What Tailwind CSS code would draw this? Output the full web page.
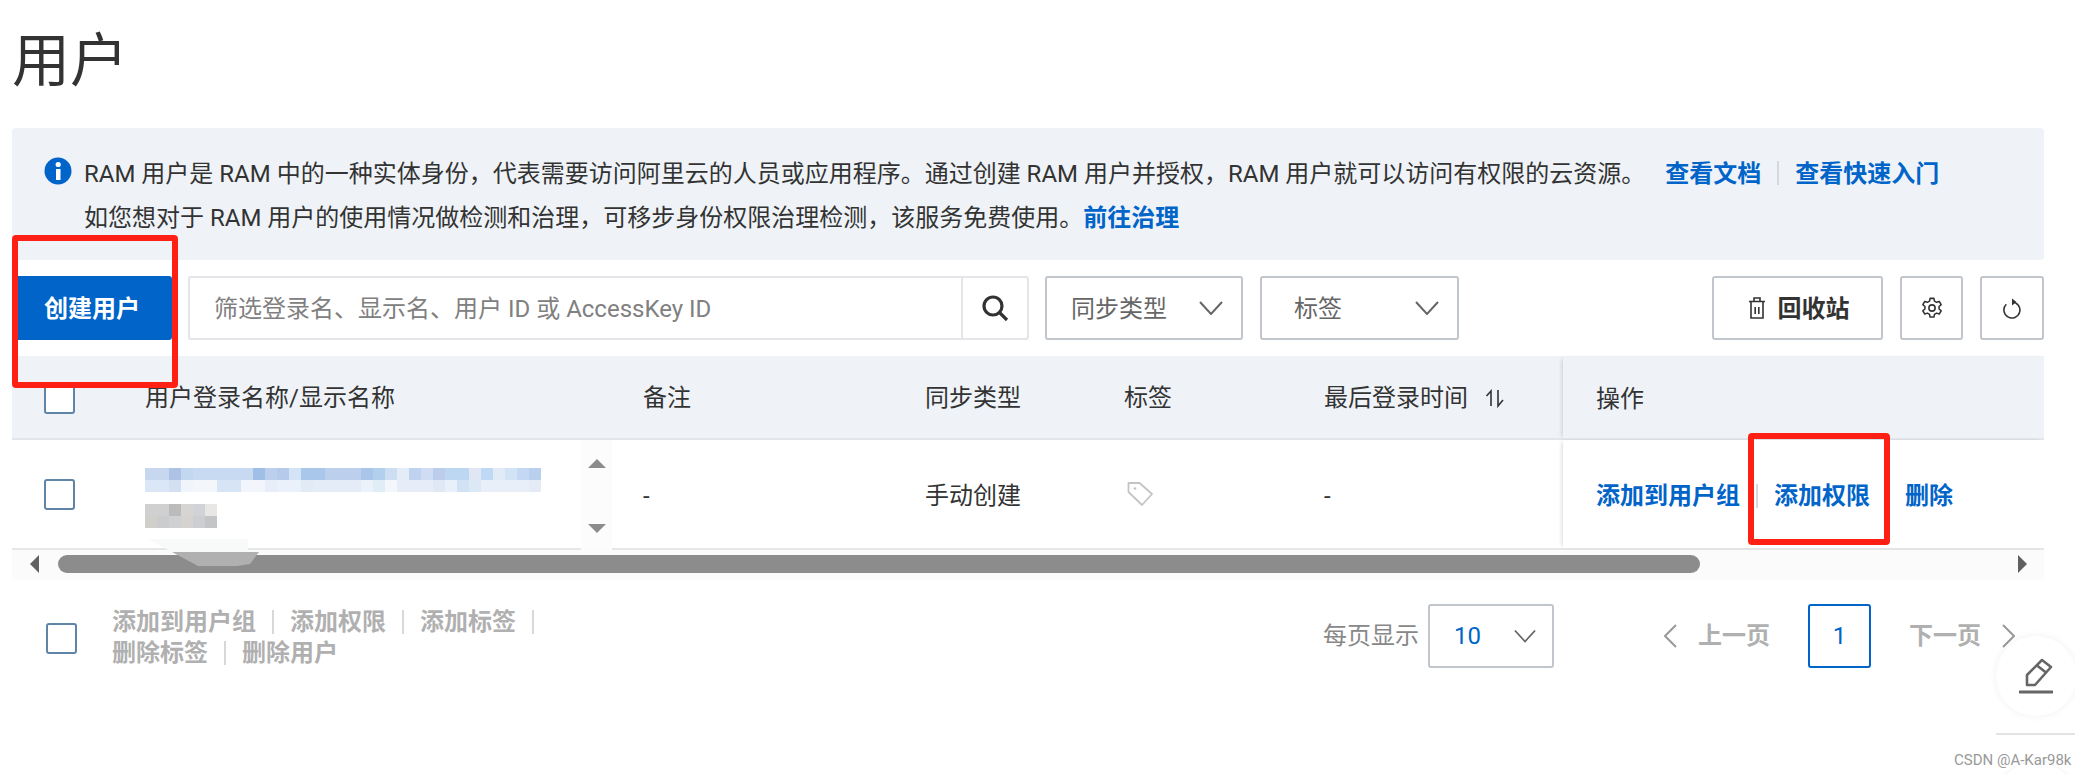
<!DOCTYPE html>
<html lang="zh">
<head>
    <meta charset="UTF-8">
    <title>用户</title>
    <script src="https://cdn.jsdelivr.net/npm/@tailwindcss/browser@4"></script>
</head>
<body class="bg-white text-[#333] text-[24px] [font-family:'Roboto','Noto_Sans_CJK_SC',sans-serif]">
<div class="relative w-[2075px] h-[775px] overflow-hidden pl-[12px] pr-[31px]">

    <!-- Title -->
    <div class="h-[128px] pt-[23px]">
        <h1 class="text-[58px] leading-[76px] font-normal">用户</h1>
    </div>

    <!-- Info banner -->
    <div class="h-[132px] bg-[#eff3f8] rounded-[4px] pt-[24px] flex">
        <svg class="ml-[32px] mt-[5px] mr-[12px] shrink-0" width="28" height="28" viewBox="0 0 28 28">
            <circle cx="14" cy="14" r="13.5" fill="#0064c8"/>
            <rect x="12" y="12" width="4.5" height="11" fill="#fff"/>
            <circle cx="14.2" cy="7.5" r="2.6" fill="#fff"/>
        </svg>
        <div class="leading-[44px] whitespace-nowrap">
            <p>RAM 用户是 RAM 中的一种实体身份，代表需要访问阿里云的人员或应用程序。通过创建 RAM 用户并授权，RAM 用户就可以访问有权限的云资源。<a class="ml-[20px] font-bold text-[#0064c8]">查看文档</a><span class="inline-block w-[2px] h-[24px] bg-[#d5d9de] mx-[16px] align-[-3px]"></span><a class="font-bold text-[#0064c8]">查看快速入门</a></p>
            <p>如您想对于 RAM 用户的使用情况做检测和治理，可移步身份权限治理检测，该服务免费使用。<a class="font-bold text-[#0064c8]">前往治理</a></p>
        </div>
    </div>

    <!-- Toolbar -->
    <div class="h-[96px] flex items-center">
        <button class="w-[160px] h-[64px] pt-[2px] bg-[#0064c8] text-white font-bold rounded-[3px]">创建用户</button>
        <div class="ml-[16px] w-[841px] h-[64px] border-2 border-[#e3e5e8] rounded-[3px] flex">
            <div class="flex-1 pl-[24px] leading-[62px] text-[#808080]">筛选登录名、显示名、用户 ID 或 AccessKey ID</div>
            <div class="w-[66px] border-l-2 border-[#e3e5e8] flex items-center justify-center">
                <svg width="28" height="28" viewBox="0 0 28 28" fill="none" stroke="#333" stroke-width="3.2"><circle cx="12" cy="12" r="9"/><path d="M18.5 18.5 26 26"/></svg>
            </div>
        </div>
        <div class="ml-[16px] w-[198px] h-[64px] pt-[2px] border-2 border-[#c1c6cc] rounded-[3px] flex items-center justify-between pl-[24px] pr-[18px] text-[#666]">
            <span>同步类型</span>
            <svg class="-mt-[2px]" width="24" height="14" viewBox="0 0 24 14" fill="none" stroke="#666" stroke-width="2"><path d="M1 1l11 12L23 1"/></svg>
        </div>
        <div class="ml-[17px] w-[199px] h-[64px] pt-[2px] border-2 border-[#c1c6cc] rounded-[3px] flex items-center justify-between pl-[32px] pr-[18px] text-[#666]">
            <span>标签</span>
            <svg class="-mt-[2px]" width="24" height="14" viewBox="0 0 24 14" fill="none" stroke="#666" stroke-width="2"><path d="M1 1l11 12L23 1"/></svg>
        </div>
        <button class="ml-auto w-[171px] h-[64px] pl-[3px] border-2 border-[#c1c6cc] rounded-[3px] flex items-center justify-center gap-[13px] font-bold">
            <svg width="16" height="22" viewBox="0 0 16 22" fill="none" stroke="#333" stroke-width="1.6"><path d="M0 4.5h16M5 4V1h6v3M2 5v16h12V5M6.2 10v7M9.8 10v7"/></svg>
            <span class="pt-[2px]">回收站</span>
        </button>
        <button class="ml-[17px] w-[63px] h-[64px] border-2 border-[#c1c6cc] rounded-[3px] flex items-center justify-center">
            <svg width="22" height="22" viewBox="0 0 24 24" fill="none" stroke="#333" stroke-width="1.7"><circle cx="12" cy="12" r="3.4"/><path d="M9.9 1.5h4.2l.6 3 2.3 1.3 2.9-1 2.1 3.6-2.3 2 0 2.6 2.3 2-2.1 3.6-2.9-1-2.3 1.3-.6 3H9.900l-.6-3-2.300-1.300-2.900 1-2.100-3.600 2.300-2V10.400l-2.300-2 2.100-3.600 2.900 1 2.300-1.300z" stroke-linejoin="round"/></svg>
        </button>
        <button class="ml-[17px] w-[64px] h-[64px] border-2 border-[#c1c6cc] rounded-[3px] flex items-center justify-center">
            <svg width="20" height="22" viewBox="0 0 20 22" fill="none" stroke="#333" stroke-width="1.6"><path d="M10 5A8 8 0 1 1 4.300 7.300"/><path d="M10 1.500l4.500 3.500-4.500 3.500z" fill="#333" stroke="none"/></svg>
        </button>
    </div>

    <!-- Table -->
    <div class="grid grid-cols-[133px_498px_282px_199px_200px_239px_1fr] h-[84px] bg-[#eff3f8] border-b-2 border-[#e3e5e8] items-center leading-[84px]">
        <div class="pl-[32px]"><div class="w-[31px] h-[31px] bg-white border-2 border-[#5f84a8] rounded-[3px]"></div></div>
        <div>用户登录名称/显示名称</div>
        <div>备注</div>
        <div>同步类型</div>
        <div>标签</div>
        <div class="flex items-center gap-[17px]">
            <span>最后登录时间</span>
            <svg width="20" height="20" viewBox="0 0 20 20" fill="none" stroke="#333" stroke-width="1.6"><path d="M6 18V3L1.500 8M13 2v16l5-6"/></svg>
        </div>
        <div class="pl-[33px] h-[82px] shadow-[-3px_0_4px_-2px_rgba(0,0,0,0.15)]">操作</div>
    </div>
    <div class="grid grid-cols-[133px_498px_282px_199px_200px_239px_1fr] h-[110px] border-b-2 border-[#e6e6e6] items-center">
        <div class="pl-[32px]"><div class="w-[31px] h-[31px] border-2 border-[#5f84a8] rounded-[3px]"></div></div>
        <div class="relative h-[108px] pt-[28px]">
            <!-- mosaic over the user name -->
            <div class="flex h-[12px]">
                <div class="w-[24px] bg-[#c6d7ef]"></div><div class="w-[12px] bg-[#aec2e5]"></div><div class="w-[12px] bg-[#c2d8f0]"></div><div class="w-[60px] bg-[#c8daf1]"></div><div class="w-[12px] bg-[#9fbfe6]"></div><div class="w-[12px] bg-[#bcd0ee]"></div><div class="w-[12px] bg-[#b6cbeb]"></div><div class="w-[12px] bg-[#d2e4f6]"></div><div class="w-[24px] bg-[#a9c7ea]"></div><div class="w-[36px] bg-[#bcd0ed]"></div><div class="w-[12px] bg-[#a9c5ea]"></div><div class="w-[12px] bg-[#b0d0ee]"></div><div class="w-[12px] bg-[#cddef3]"></div><div class="w-[12px] bg-[#e4ecf8]"></div><div class="w-[12px] bg-[#bfd3f0]"></div><div class="w-[12px] bg-[#cfdcf4]"></div><div class="w-[12px] bg-[#bccdec]"></div><div class="w-[24px] bg-[#bdd7f2]"></div><div class="w-[12px] bg-[#e1e6f5]"></div><div class="w-[12px] bg-[#bed8f5]"></div><div class="w-[12px] bg-[#e1ebf7]"></div><div class="w-[12px] bg-[#d2e3f6]"></div><div class="w-[12px] bg-[#c4d8f3]"></div><div class="w-[12px] bg-[#b9cfee]"></div>
            </div>
            <div class="flex h-[12px]">
                <div class="w-[24px] bg-[#dbe7f7]"></div><div class="w-[12px] bg-[#d2e0f2]"></div><div class="w-[12px] bg-[#eff5fb]"></div><div class="w-[24px] bg-[#f3f6fb]"></div><div class="w-[24px] bg-[#d6e4f6]"></div><div class="w-[24px] bg-[#f2f6fc]"></div><div class="w-[12px] bg-[#e8eef9]"></div><div class="w-[24px] bg-[#eaf1fa]"></div><div class="w-[12px] bg-[#e1ebf6]"></div><div class="w-[36px] bg-[#e4ecf8]"></div><div class="w-[12px] bg-[#e4edf7]"></div><div class="w-[12px] bg-[#ecf2fa]"></div><div class="w-[12px] bg-[#e0ecf6]"></div><div class="w-[12px] bg-[#f3f7fc]"></div><div class="w-[36px] bg-[#e6edf8]"></div><div class="w-[12px] bg-[#e0e8f6]"></div><div class="w-[12px] bg-[#e8f0f9]"></div><div class="w-[12px] bg-[#d2e2f5]"></div><div class="w-[12px] bg-[#dde8f6]"></div><div class="w-[48px] bg-[#e9eff9]"></div><div class="w-[12px] bg-[#e4ebf7]"></div>
            </div>
            <div class="flex h-[12px] mt-[12px]">
                <div class="w-[24px] bg-[#d0d0d0]"></div><div class="w-[12px] bg-[#bbbbbb]"></div><div class="w-[12px] bg-[#d6d5d3]"></div><div class="w-[12px] bg-[#d2d3d8]"></div><div class="w-[12px] bg-[#e8e7e5]"></div>
            </div>
            <div class="flex h-[12px]">
                <div class="w-[12px] bg-[#d0cfcc]"></div><div class="w-[12px] bg-[#cbccce]"></div><div class="w-[12px] bg-[#cfd0d1]"></div><div class="w-[12px] bg-[#d5d2cf]"></div><div class="w-[12px] bg-[#cdced2]"></div><div class="w-[12px] bg-[#c4c5c6]"></div>
            </div>
            <!-- little scroll bar of the cell -->
            <div class="absolute left-[436px] top-0 w-[31px] h-[110px] bg-[#fcfcfc] flex flex-col items-center justify-between pt-[19px] pb-[17px]">
                <div class="w-0 h-0 border-x-[9px] border-x-transparent border-b-[9px] border-b-[#8c8c8c]"></div>
                <div class="w-0 h-0 border-x-[9px] border-x-transparent border-t-[9px] border-t-[#8c8c8c]"></div>
            </div>
        </div>
        <div class="pt-[4px]">-</div>
        <div class="pt-[4px]">手动创建</div>
        <div class="pl-[3px]">
            <svg width="26" height="26" viewBox="0 0 26 26" fill="none" stroke="#c4c4c4" stroke-width="1.8" stroke-linejoin="round"><path d="M1.500 2h11L25 13 15 24 1.500 11z"/><circle cx="8" cy="7.500" r="1.300" fill="#c4c4c4" stroke="none"/></svg>
        </div>
        <div class="pt-[4px]">-</div>
        <div class="pl-[33px] h-[108px] pt-[4px] flex items-center font-bold text-[#0064c8] shadow-[-3px_0_4px_-2px_rgba(0,0,0,0.15)]">
            <a>添加到用户组</a><span class="w-[2px] h-[24px] bg-[#d5d9de] ml-[16px] mr-[16px]"></span><a>添加权限</a><a class="ml-[35px]">删除</a>
        </div>
    </div>

    <!-- Horizontal scroll bar -->
    <div class="h-[30px] bg-[#fbfbfb] flex items-center pl-[18px] pr-[17px] pb-[2px]">
        <div class="w-0 h-0 border-y-[9px] border-y-transparent border-r-[9px] border-r-[#606060]"></div>
        <div class="ml-[19px] w-[1642px] h-[18px] bg-[#8c8c8c] rounded-full"></div>
        <div class="ml-auto w-0 h-0 border-y-[9px] border-y-transparent border-l-[9px] border-l-[#606060]"></div>
    </div>

    <!-- Footer -->
    <div class="flex pt-[24px] h-[88px]">
        <div class="ml-[34px] mt-[19px] w-[31px] h-[31px] border-2 border-[#5f84a8] rounded-[3px]"></div>
        <div class="ml-[35px] w-[460px] text-[#b0b0b0] font-bold leading-[30px] pt-[3px]">
            <div class="flex items-center h-[30px]"><span>添加到用户组</span><i class="w-[2px] h-[24px] bg-[#d8d8d8] mx-[16px]"></i><span>添加权限</span><i class="w-[2px] h-[24px] bg-[#d8d8d8] mx-[16px]"></i><span>添加标签</span><i class="w-[2px] h-[24px] bg-[#d8d8d8] mx-[16px]"></i></div>
            <div class="flex items-center h-[30px] mt-[1px]"><span>删除标签</span><i class="w-[2px] h-[24px] bg-[#d8d8d8] mx-[16px]"></i><span>删除用户</span></div>
        </div>
        <div class="ml-[751px] flex items-center h-[64px] text-[#888]">
            <span>每页显示</span>
            <div class="ml-[9px] w-[126px] h-[64px] border-2 border-[#c1c6cc] rounded-[3px] flex items-center justify-between pl-[24px] pr-[16px] text-[#0064c8]">
                <span>10</span>
                <svg width="22" height="14" viewBox="0 0 24 14" fill="none" stroke="#666" stroke-width="2"><path d="M1 1l11 12L23 1"/></svg>
            </div>
            <svg class="ml-[110px]" width="13" height="24" viewBox="0 0 13 24" fill="none" stroke="#999" stroke-width="2"><path d="M12 1 1 12l11 11"/></svg>
            <span class="ml-[21px] font-bold text-[#b0b0b0]">上一页</span>
            <div class="ml-[38px] w-[63px] h-[64px] border-2 border-[#0064c8] rounded-[3px] flex items-center justify-center text-[#0064c8]">1</div>
            <span class="ml-[38px] font-bold text-[#b0b0b0]">下一页</span>
            <svg class="ml-[21px]" width="13" height="24" viewBox="0 0 13 24" fill="none" stroke="#999" stroke-width="2"><path d="M1 1l11 11L1 23"/></svg>
        </div>
    </div>

    <!-- Red annotation boxes -->
    <div class="absolute left-[12px] top-[235px] w-[166px] h-[153px] border-[6px] border-[#ff2015] rounded-[4px]"></div>
    <div class="absolute left-[1748px] top-[433px] w-[142px] h-[112px] border-[6px] border-[#ff2015] rounded-[4px]"></div>

    <!-- Smear left by the mosaic -->
    <svg class="absolute left-[148px] top-[538px]" width="115" height="30" viewBox="0 0 115 30">
        <path d="M0 1h100v13H24z" fill="#f8f9f9"/>
        <path d="M24 14h87l-9 12-13 2H50z" fill="#b0b0b0"/>
    </svg>

    <!-- Floating buttons -->
    <div class="absolute left-[1996px] top-[636px] w-[80px] h-[80px] rounded-full bg-white shadow-[0_0_8px_rgba(0,0,0,0.06)] flex items-center justify-center">
        <svg width="36" height="36" viewBox="0 0 36 36" fill="none" stroke="#666" stroke-width="2.600" stroke-linejoin="round"><path d="M24 2 33 9 17 27H9V17z"/><path d="M19 7.500l9 7"/><path d="M1 34h34" stroke-width="3"/></svg>
    </div>
    <div class="absolute left-[1996px] top-[733px] w-[80px] h-[2px] bg-[#e4e4e4]"></div>
    <div class="absolute left-[1996px] top-[762px] w-[80px] h-[80px] rounded-full bg-white shadow-[0_0_6px_rgba(0,0,0,0.06)]"></div>
    <div class="absolute left-[1954px] top-[749px] text-[15px] leading-[22px] text-[#999] whitespace-nowrap">CSDN @A-Kar98k</div>
</div>
</body>
</html>
